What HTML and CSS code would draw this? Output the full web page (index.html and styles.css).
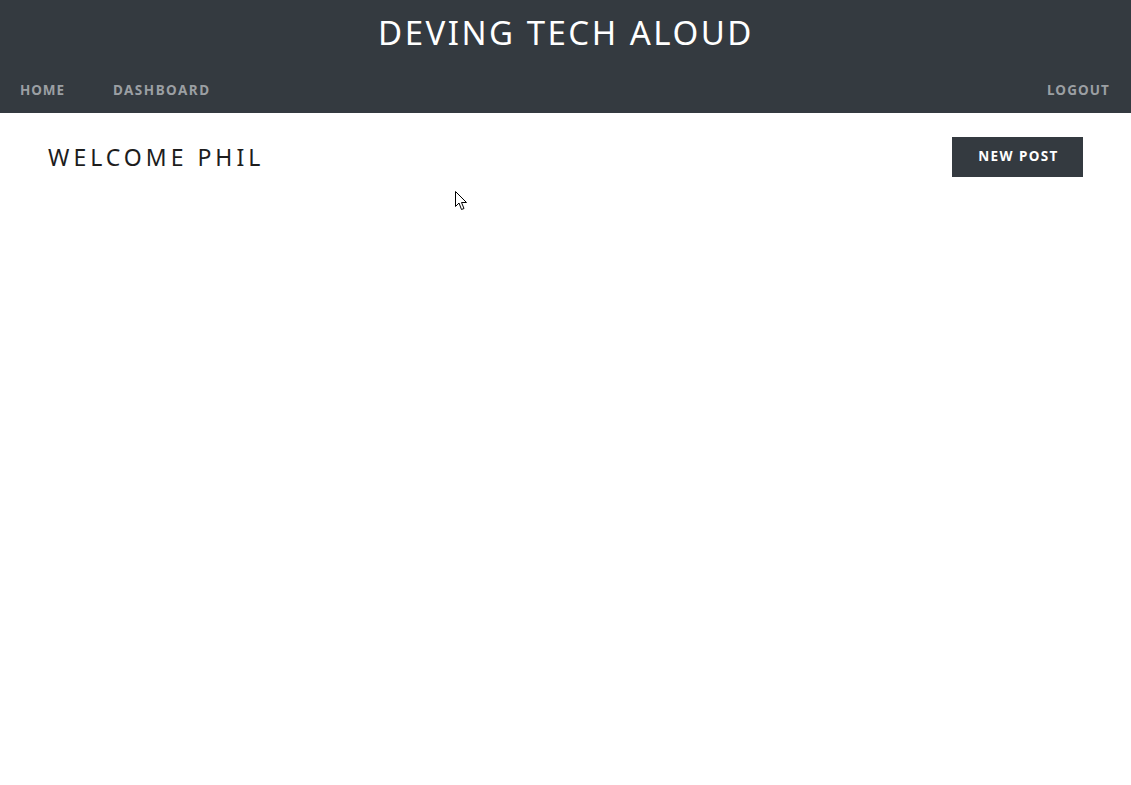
FILE: index.html
```html
<!DOCTYPE html>
<html lang="en">
<head>
<meta charset="utf-8">
<title>Deving Tech Aloud</title>
<link rel="stylesheet" href="styles.css">
</head>
<body>
<header class="site-header">
  <h1 class="site-title">DEVING TECH ALOUD</h1>
  <nav class="site-nav">
    <div class="nav-left">
      <a class="nav-link nav-home" href="#">HOME</a>
      <a class="nav-link" href="#">DASHBOARD</a>
    </div>
    <a class="nav-link nav-logout" href="#">LOGOUT</a>
  </nav>
</header>
<main class="dashboard">
  <div class="dash-head">
    <h2 class="welcome">WELCOME PHIL</h2>
    <button class="btn-new" type="button">NEW POST</button>
  </div>
</main>
<svg class="cursor" width="13" height="20" viewBox="0 0 13 20" aria-hidden="true">
  <path d="M0.5 0.5 L0.5 15.5 L4 12 L6.5 18.5 L9 17.5 L6.5 11.5 L11.5 11.5 Z" fill="#fff" stroke="#000" stroke-width="1" stroke-linejoin="miter"/>
</svg>
</body>
</html>
```
FILE: styles.css
```css
* { box-sizing: border-box; }
html, body { margin: 0; padding: 0; background: #fff; }
body {
  font-family: "Noto Sans", "Open Sans", sans-serif;
  position: relative;
  min-height: 785px;
}
.site-header {
  background: #343a40;
  height: 113px;
  display: flex;
  flex-direction: column;
}
.site-title {
  margin: 0;
  height: 64px;
  display: flex;
  align-items: center;
  justify-content: center;
  color: #fff;
  font-size: 33px;
  font-weight: 400;
  letter-spacing: 2.5px;
  padding-left: 1px;
}
.site-nav {
  display: flex;
  justify-content: space-between;
  align-items: center;
  padding: 3px 21px 0 20px;
  height: 49px;
}
.nav-left { display: flex; gap: 48px; }
.nav-link {
  color: #9b9fa3;
  text-decoration: none;
  font-size: 13.5px;
  font-weight: 700;
  letter-spacing: 1.5px;
  line-height: 18px;
}
.nav-home { letter-spacing: 0.9px; }
.nav-logout { letter-spacing: 1.1px; }
.dashboard { padding: 24px 48px 0 48px; }
.dash-head {
  display: flex;
  justify-content: space-between;
  align-items: center;
}
.welcome {
  margin: 0;
  font-size: 23px;
  font-weight: 400;
  letter-spacing: 4px;
  color: #1d1d1d;
  line-height: 38px;
}
.btn-new {
  background: #343a40;
  color: #fff;
  border: 0;
  width: 131px;
  height: 40px;
  font-family: inherit;
  font-size: 13.5px;
  font-weight: 700;
  letter-spacing: 1.4px;
  padding: 0 0 2px 2px;
}
.cursor { position: absolute; left: 455px; top: 191px; }
```
